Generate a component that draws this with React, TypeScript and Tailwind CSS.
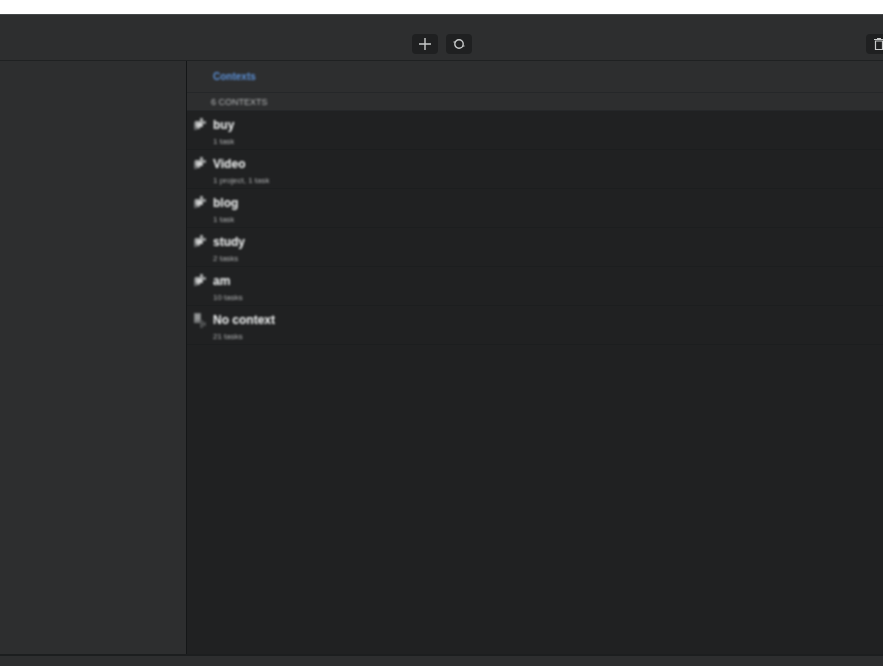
interface Context {
  name: string;
  detail: string;
  pinned: boolean;
}

const contexts: Context[] = [
  { name: "buy", detail: "1 task", pinned: true },
  { name: "Video", detail: "1 project, 1 task", pinned: true },
  { name: "blog", detail: "1 task", pinned: true },
  { name: "study", detail: "2 tasks", pinned: true },
  { name: "am", detail: "10 tasks", pinned: true },
  { name: "No context", detail: "21 tasks", pinned: false },
];

const toolButton =
  "flex h-5 w-[26px] shrink-0 items-center justify-center rounded-[4px] bg-[#1f2021] text-[#c8caca]";

function PinIcon() {
  return (
    <svg width="12" height="12" viewBox="0 0 12 12" aria-hidden="true">
      <path d="M0 4h3v8H0z" fill="#66686a" />
      <path d="M1 3h5v8H3V9H1z" fill="#a2a4a4" />
      <path d="M6 0h3v9H6z" fill="#a2a4a4" />
      <path d="M9 3h3v3H9z" fill="#939596" />
      <path d="M3 5h5v4H3z" fill="#d2d3d3" />
    </svg>
  );
}

function NoContextIcon() {
  return (
    <svg width="12" height="16" viewBox="0 0 12 16" aria-hidden="true">
      <path d="M0 0h7v10H0z" fill="#77797a" />
      <path d="M1 1h5v6H1z" fill="#929495" />
      <path d="M6 7h3v2h3v4H9v2H6z" fill="#4b4d4e" />
    </svg>
  );
}

function Toolbar() {
  return (
    <header className="grid h-[47px] grid-cols-[1fr_auto_1fr] items-center overflow-hidden border-t border-b border-t-[#444849] border-b-[#1f2122] pt-3">
      <span />
      <div className="flex gap-2">
        <button className={toolButton} aria-label="Add">
          <svg width="12" height="12" viewBox="0 0 12 12" aria-hidden="true">
            <path d="M6 0v12M0 6h12" stroke="currentColor" strokeWidth="1.4" />
          </svg>
        </button>
        <button className={toolButton} aria-label="Sync">
          <svg width="12" height="12" viewBox="0 0 12 12" fill="none" aria-hidden="true">
            <circle cx="6" cy="6" r="4.2" stroke="currentColor" strokeWidth="1.4" />
            <path d="M0.5 4h2M9.5 8h2" stroke="currentColor" strokeWidth="1.2" />
          </svg>
        </button>
      </div>
      <div className="-mr-[9px] flex justify-end">
        <button className={toolButton} aria-label="Delete">
          <svg width="12" height="12" viewBox="0 0 12 12" fill="none" aria-hidden="true">
            <path d="M1 1.5h10M4 0.5h4M2.5 3h7v8.5h-7z" stroke="currentColor" strokeWidth="1.2" />
          </svg>
        </button>
      </div>
    </header>
  );
}

function ContextRow({ name, detail, pinned }: Context) {
  return (
    <li className="flex h-[39px] gap-[7px] border-b border-[#1c1e1f] pt-[7px] pl-[7px]">
      <span className="w-3 shrink-0 blur-[1px]">
        {pinned ? <PinIcon /> : <NoContextIcon />}
      </span>
      <div className="blur-[1px]">
        <p className="text-[12px] leading-[14px] font-bold text-[#f4f6f6]">{name}</p>
        <p className="pt-[5px] text-[8px] leading-[10px] text-[#b0b2b3]">{detail}</p>
      </div>
    </li>
  );
}

export default function App() {
  return (
    <div className="flex min-h-screen flex-col bg-white pt-[14px] font-['Liberation_Sans',Arial,sans-serif]">
      <div className="flex grow flex-col bg-[#2d2e2f]">
        <Toolbar />
        <div className="flex grow">
          <aside className="w-[186px] shrink-0" />
          <main className="min-w-0 grow border-l border-[#141617] bg-[#202122]">
            <div className="flex h-8 items-center border-b border-[#252729] bg-[#2d2e2f] pl-[26px]">
              <h1 className="text-[10px] leading-3 font-bold text-[#5c90d6] blur-[1px]">
                Contexts
              </h1>
            </div>
            <div className="flex h-[18px] items-center border-b border-[#252729] bg-[#2d2e2f] pl-6">
              <h2 className="text-[9px] leading-3 text-[#b4b6b7] blur-[1px]">6 CONTEXTS</h2>
            </div>
            <ul>
              {contexts.map((context) => (
                <ContextRow key={context.name} {...context} />
              ))}
            </ul>
          </main>
        </div>
        <footer className="h-3 border-t-2 border-[#1c1e1f]" />
      </div>
    </div>
  );
}
